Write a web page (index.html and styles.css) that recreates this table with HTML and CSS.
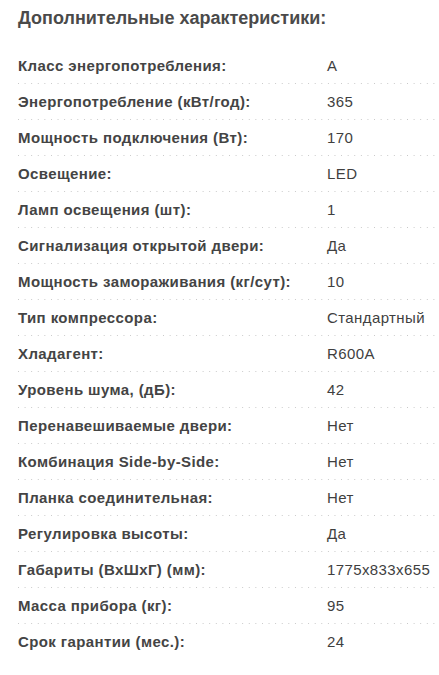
FILE: index.html
```html
<!DOCTYPE html>
<html lang="ru">
<head>
<meta charset="utf-8">
<link rel="stylesheet" href="styles.css">
</head>
<body>
<div class="specs">
  <h2 class="specs-title">Дополнительные характеристики:</h2>
  <div class="specs-list">
    <div class="row"><div class="label">Класс энергопотребления:</div><div class="value">A</div></div>
    <div class="row"><div class="label">Энергопотребление (кВт/год):</div><div class="value">365</div></div>
    <div class="row"><div class="label">Мощность подключения (Вт):</div><div class="value">170</div></div>
    <div class="row"><div class="label">Освещение:</div><div class="value">LED</div></div>
    <div class="row"><div class="label">Ламп освещения (шт):</div><div class="value">1</div></div>
    <div class="row"><div class="label">Сигнализация открытой двери:</div><div class="value">Да</div></div>
    <div class="row"><div class="label">Мощность замораживания (кг/сут):</div><div class="value">10</div></div>
    <div class="row"><div class="label">Тип компрессора:</div><div class="value">Стандартный</div></div>
    <div class="row"><div class="label">Хладагент:</div><div class="value">R600A</div></div>
    <div class="row"><div class="label">Уровень шума, (дБ):</div><div class="value">42</div></div>
    <div class="row"><div class="label">Перенавешиваемые двери:</div><div class="value">Нет</div></div>
    <div class="row"><div class="label">Комбинация Side-by-Side:</div><div class="value">Нет</div></div>
    <div class="row"><div class="label">Планка соединительная:</div><div class="value">Нет</div></div>
    <div class="row"><div class="label">Регулировка высоты:</div><div class="value">Да</div></div>
    <div class="row"><div class="label">Габариты (ВхШхГ) (мм):</div><div class="value">1775x833x655</div></div>
    <div class="row"><div class="label">Масса прибора (кг):</div><div class="value">95</div></div>
    <div class="row"><div class="label">Срок гарантии (мес.):</div><div class="value">24</div></div>
  </div>
</div>
</body>
</html>
```
FILE: styles.css
```css
html, body {
  margin: 0;
  padding: 0;
  background: #fff;
}
body {
  font-family: "Liberation Sans", Arial, sans-serif;
  color: #444;
}
.specs {
  padding: 0 0 0 18px;
}
.specs-title {
  margin: 0;
  padding-top: 7px;
  height: 41px;
  font-size: 18px;
  line-height: 22px;
  font-weight: bold;
  color: #4a4a4a;
}
.specs-list {
  display: flex;
  flex-direction: column;
}
.row {
  display: flex;
  align-items: center;
  height: 35px;
  font-size: 15px;
  letter-spacing: 0.4px;
  background-image: linear-gradient(to right, #c8c8c8 1px, transparent 1px);
  background-size: 6.6px 1px;
  background-repeat: repeat-x;
  background-position: left bottom;
  padding-bottom: 1px;
}
.row:last-child {
  background-image: none;
}
.label {
  width: 309px;
  flex: none;
  font-weight: bold;
  color: #444;
}
.value {
  color: #3f3f3f;
}
```
